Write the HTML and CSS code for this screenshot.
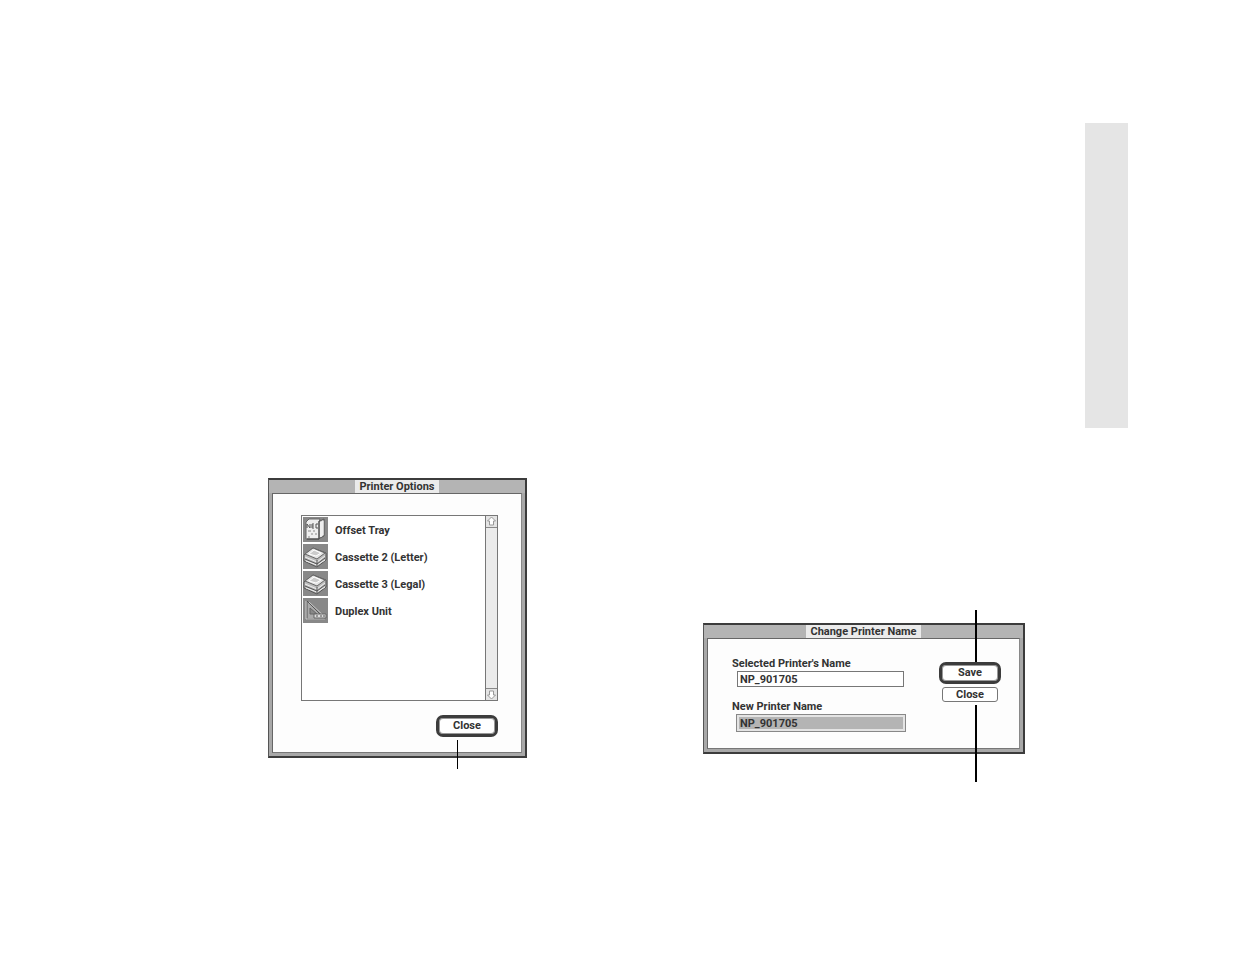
FILE: index.html
```
<!DOCTYPE html>
<html lang="en">

<head>
    <meta charset="UTF-8">
    <meta name="viewport" content="width=device-width, initial-scale=1.0">
    <title>Printer Utility</title>
    <link rel="stylesheet" href="styles.css">
</head>

<body>
    <main class="page">
        <div class="tab"></div>

        <div class="figures">
            <section class="dialog options">
                <header class="titlebar"><h2>Printer Options</h2></header>
                <div class="content">
                    <div class="list">
                        <ul>
                            <li>
                                <svg class="icon" viewBox="0 0 25 25">
                                    <rect width="25" height="25" fill="#888"/>
                                    <path d="M15 5l6-3v17l-6 3z" fill="#ddd" stroke="#555"/>
                                    <path d="M18 5v15M20 4v14" stroke="#fff"/>
                                    <path d="M3 5l3-3h11l-1 3v17H3z" fill="#eee" stroke="#666"/>
                                    <path d="M16 4v18H4" fill="none" stroke="#444"/>
                                    <path d="M4 11V7l3 4V7M11 7H9v4h2M9 9h2M15 7h-2v4h2" fill="none" stroke="#555"/>
                                    <path d="M5 14h3M10 14h2M8 17h2M12 17h2M5 20h2" stroke="#888"/>
                                </svg>
                                <span>Offset Tray</span>
                            </li>
                            <li>
                                <svg class="icon" viewBox="0 0 25 25">
                                    <rect width="25" height="25" fill="#888"/>
                                    <path d="M1 11l9-7 13 5v7l-9 7-13-6z" fill="#bbb" stroke="#555"/>
                                    <path d="M2 10l8-6 12 5-8 6z" fill="#e4e4e4" stroke="#666"/>
                                    <path d="M6 10l5-4 7 3-5 3z" fill="#ccc" stroke="#fff"/>
                                    <path d="M2 13l12 5 8-6M3 17l11 4 8-5" fill="none" stroke="#eee"/>
                                    <path d="M2 15l12 5 8-6M14 16v6" fill="none" stroke="#555"/>
                                </svg>
                                <span>Cassette 2 (Letter)</span>
                            </li>
                            <li>
                                <svg class="icon" viewBox="0 0 25 25">
                                    <rect width="25" height="25" fill="#888"/>
                                    <path d="M1 11l9-7 13 5v7l-9 7-13-6z" fill="#bbb" stroke="#555"/>
                                    <path d="M2 10l8-6 12 5-8 6z" fill="#e4e4e4" stroke="#666"/>
                                    <path d="M6 10l5-4 7 3-5 3z" fill="#ccc" stroke="#fff"/>
                                    <path d="M2 13l12 5 8-6M3 17l11 4 8-5" fill="none" stroke="#eee"/>
                                    <path d="M2 15l12 5 8-6M14 16v6" fill="none" stroke="#555"/>
                                </svg>
                                <span>Cassette 3 (Legal)</span>
                            </li>
                            <li>
                                <svg class="icon" viewBox="0 0 25 25">
                                    <rect width="25" height="25" fill="#888"/>
                                    <path d="M4 3v18h18z" fill="#aaa" stroke="#555"/>
                                    <path d="M3 3v18h19M6 4l16 15" fill="none" stroke="#ccc"/>
                                    <path d="M7 10v6h7z" fill="#888" stroke="#666"/>
                                    <path d="M11 16h12v4H11z" fill="#ddd" stroke="#666"/>
                                    <path d="M13 18h2M17 18h2M20 18h2" stroke="#555"/>
                                </svg>
                                <span>Duplex Unit</span>
                            </li>
                        </ul>
                        <div class="scrollbar">
                            <button type="button" aria-label="Scroll up">
                                <svg viewBox="0 0 11 11"><path d="M5.5 1l4 4h-2v4h-4V5h-2z"/></svg>
                            </button>
                            <button type="button" aria-label="Scroll down">
                                <svg viewBox="0 0 11 11"><path d="M5.5 10l4-4h-2V2h-4v4h-2z"/></svg>
                            </button>
                        </div>
                    </div>
                    <button type="button" class="btn default">Close</button>
                </div>
                <i class="callout callout-close"></i>
            </section>

            <section class="dialog rename">
                <header class="titlebar"><h2>Change Printer Name</h2></header>
                <form class="content">
                    <div class="fields">
                        <label for="selected">Selected Printer's Name</label>
                        <input type="text" id="selected" value="NP_901705" readonly>
                        <label for="newname">New Printer Name</label>
                        <input type="text" id="newname" class="active" value="NP_901705" autocomplete="off" spellcheck="false">
                    </div>
                    <div class="actions">
                        <button type="button" class="btn default">Save</button>
                        <button type="button" class="btn">Close</button>
                    </div>
                </form>
                <i class="callout callout-top"></i>
                <i class="callout callout-bottom"></i>
            </section>
        </div>
    </main>
</body>

</html>
```
FILE: styles.css
```
* {
    box-sizing: border-box;
}

body {
    margin: 0;
    background-color: white;
    color: #333;
    font: bold 11px/12px Roboto, "Liberation Sans", sans-serif;
}

.page {
    padding: 123px 107px 60px 268px;
}

.tab {
    width: 43px;
    height: 305px;
    margin-left: auto;
    background-color: #e5e5e5;
}

.figures {
    display: grid;
    grid-template-columns: 259fr 322fr;
    column-gap: 176px;
    align-items: start;
    margin: 50px 103px 0 0;
}

/* windows */
.dialog {
    position: relative;
    border: 2px solid #3c3c3c;
    border-left: 1px solid #555;
    background-color: #a8a8a8;
}

.rename {
    margin-top: 145px;
}

.titlebar {
    display: flex;
    justify-content: center;
    height: 13px;
    background-color: #b4b4b4;
}

.titlebar h2 {
    margin: 0;
    padding: 0 4px;
    background-color: #ebebeb;
    font-size: 11px;
    line-height: 13px;
}

.content {
    margin: 0 3px 3px;
    border: 1px solid #666;
    border-right-color: #888;
    border-bottom-color: #777;
    background-color: #fdfdfd;
}

.options .content {
    padding: 21px 23px 15px 28px;
}

.rename .content {
    display: flex;
    justify-content: space-between;
    padding: 18px 18px 16px 24px;
}

/* list of options */
.list {
    display: flex;
    height: 186px;
    margin-bottom: 14px;
    border: 1px solid #777;
    background-color: white;
}

.list ul {
    flex: 1;
    margin: 0;
    padding: 1px;
    list-style: none;
}

.list li {
    display: flex;
    align-items: center;
    gap: 7px;
    margin-bottom: 2px;
}

.icon {
    width: 25px;
    height: 25px;
}

.list span {
    padding-top: 3px;
}

.scrollbar {
    display: flex;
    flex-direction: column;
    justify-content: space-between;
    width: 12px;
    border-left: 1px solid #777;
    background-color: #ebebeb;
}

.scrollbar button {
    height: 12px;
    padding: 0;
    border: 0;
    border-bottom: 1px solid #888;
    background-color: #e4e4e4;
}

.scrollbar button:last-child {
    border-top: 1px solid #888;
    border-bottom: 0;
}

.scrollbar svg {
    display: block;
    width: 11px;
    height: 11px;
    fill: white;
    stroke: #999;
}

/* buttons */
.btn {
    display: block;
    width: 56px;
    height: 15px;
    padding: 0;
    border: 1px solid #777;
    border-radius: 3px;
    background-color: white;
    color: #333;
    font: inherit;
}

.btn.default {
    width: 62px;
    height: 22px;
    border: 3px solid #3c3c3c;
    border-radius: 7px;
    box-shadow: inset 0 0 0 1px #999;
}

.options .btn {
    margin-left: auto;
}

.actions {
    display: flex;
    flex-direction: column;
    align-items: center;
    gap: 3px;
    padding-top: 5px;
}

/* name fields */
.fields {
    flex: 0 1 174px;
}

.fields label {
    display: block;
    height: 14px;
    line-height: 14px;
}

.fields input {
    display: block;
    width: 167px;
    height: 16px;
    margin: 0 0 13px 5px;
    padding: 0 2px;
    border: 1px solid #777;
    background-color: white;
    color: #333;
    font: inherit;
}

.fields input.active {
    width: 170px;
    height: 18px;
    margin: 0 0 0 4px;
    border-color: #888;
    background-color: #b4b4b4;
    box-shadow: inset 0 0 0 2px #e4e4e4;
    padding: 0 3px;
}

/* lines pointing at the buttons */
.callout {
    position: absolute;
    width: 2px;
    background-color: black;
}

.callout-close {
    right: 67px;
    top: 260px;
    width: 1px;
    height: 29px;
}

.callout-top {
    right: 46px;
    top: -15px;
    height: 52px;
}

.callout-bottom {
    right: 46px;
    top: 80px;
    height: 77px;
}
```
